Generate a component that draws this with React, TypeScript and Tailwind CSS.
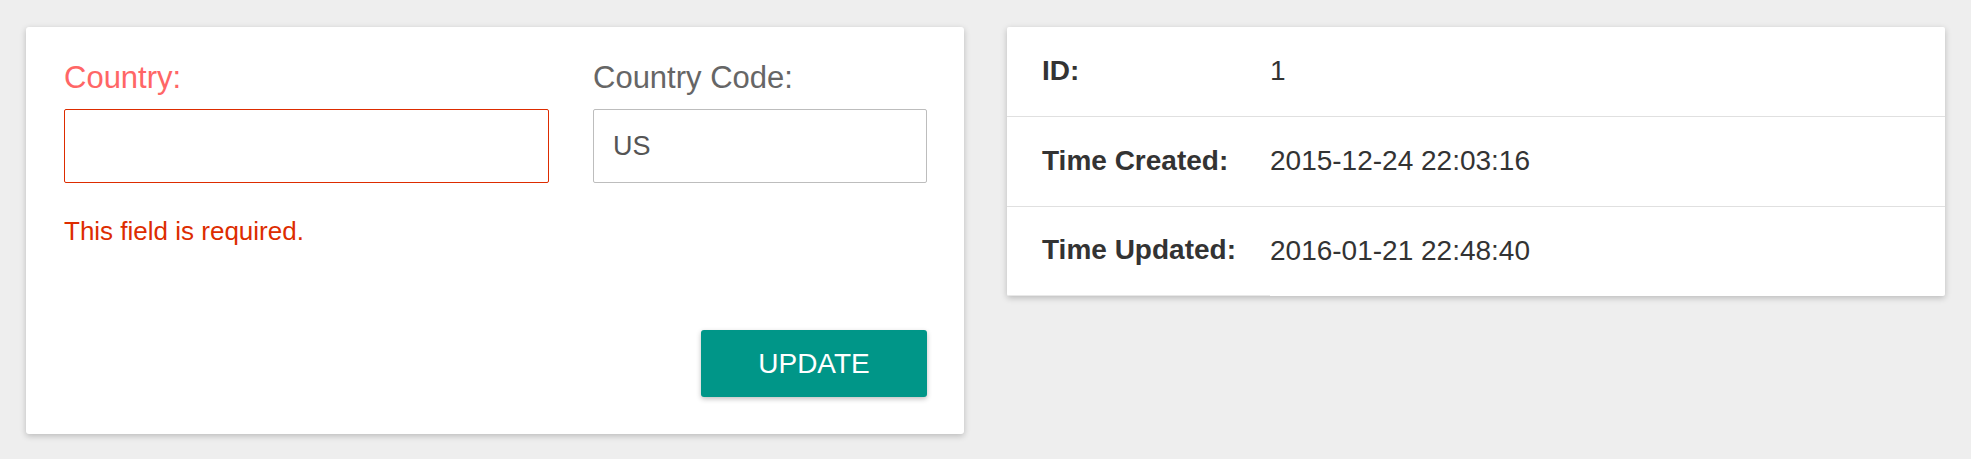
import { useState } from "react";

const rows = [
  { label: "ID:", value: "1" },
  { label: "Time Created:", value: "2015-12-24 22:03:16" },
  { label: "Time Updated:", value: "2016-01-21 22:48:40" },
];

export default function App() {
  const [country, setCountry] = useState("");
  const [code, setCode] = useState("US");

  return (
    <div className="min-h-screen w-full bg-[#eeeeee] px-[26px] pt-[27px] font-[family-name:'Liberation_Sans',Arial,sans-serif]">
      <div className="grid grid-cols-2 items-start gap-[43px]">
        {/* form card */}
        <div className="rounded-[3px] bg-white pl-[38px] pr-[37px] pt-[34px] pb-[37px] shadow-[0_2px_6px_rgba(0,0,0,0.22)]">
          <div className="grid grid-cols-[485px_334px] gap-x-[44px]">
            <div className="flex flex-col">
              <label className="text-[31px] leading-[34px] text-[#ff6666]">Country:</label>
              <input
                value={country}
                onChange={(e) => setCountry(e.target.value)}
                className="mt-[14px] h-[74px] w-full rounded-[2px] border-[1.5px] border-[#dd2c00] px-[20px] text-[27px] text-[#555] outline-none"
              />
              <p className="mt-[33px] text-[26px] leading-[30px] text-[#dd2c00]">This field is required.</p>
            </div>
            <div className="flex flex-col">
              <label className="text-[31px] leading-[34px] text-[#666]">Country Code:</label>
              <input
                value={code}
                onChange={(e) => setCode(e.target.value)}
                className="mt-[14px] h-[74px] w-full rounded-[2px] border border-[#bdbdbd] px-[19px] text-[27px] text-[#555] outline-none"
              />
              <div className="mt-[147px] flex justify-end">
                <button className="h-[67px] w-[226px] rounded-[3px] bg-[#009688] text-[28px] text-white shadow-[0_2px_5px_rgba(0,0,0,0.25)]">
                  UPDATE
                </button>
              </div>
            </div>
          </div>
        </div>

        {/* details card */}
        <div className="overflow-hidden rounded-[2px] bg-white shadow-[0_2px_6px_rgba(0,0,0,0.22)]">
          {rows.map((r, i) => {
            const last = i === rows.length - 1;
            return (
              <div
                key={r.label}
                className={`grid grid-cols-[263px_1fr] text-[28px] text-[#333] ${
                  last ? "h-[89px]" : "h-[90px] border-b border-[#e0e0e0]"
                }`}
              >
                <div
                  className={`flex items-center pb-[2px] pl-[35px] font-bold ${
                    last ? "border-b border-[#e8e8e8]" : ""
                  }`}
                >
                  {r.label}
                </div>
                <div className="flex items-center pb-[2px]">{r.value}</div>
              </div>
            );
          })}
        </div>
      </div>
    </div>
  );
}
